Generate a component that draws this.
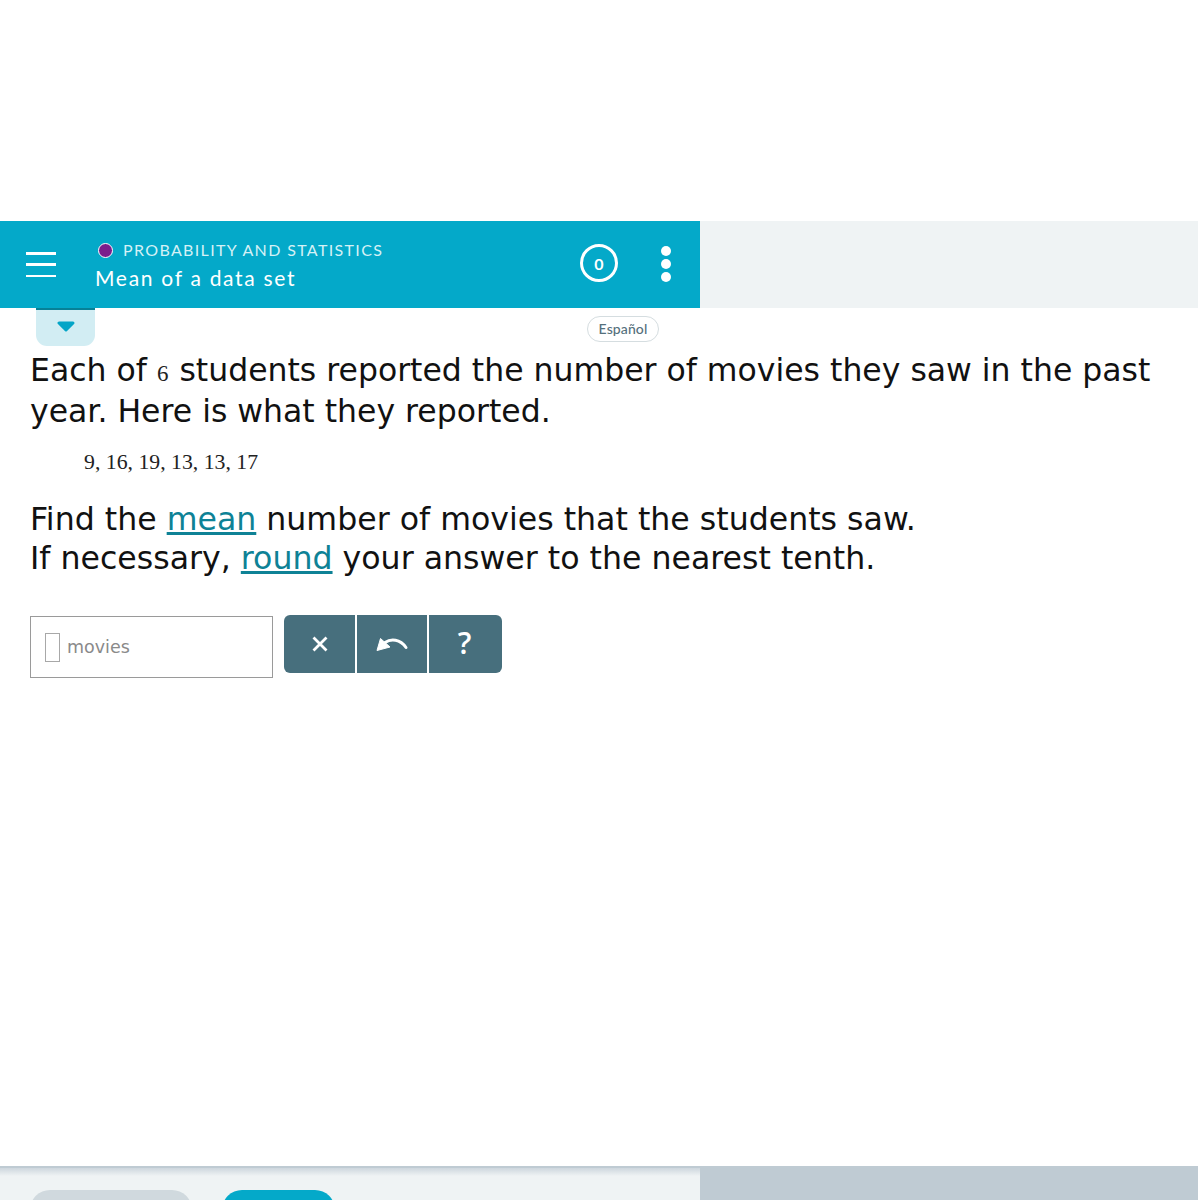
<script>
  const values = [9, 16, 19, 13, 13, 17];
</script>

<div class="page">
  <div class="top-row">
    <header class="topic-bar">
      <button class="menu" aria-label="Menu">
        <span></span><span></span><span></span>
      </button>
      <div class="titles">
        <div class="subject"><i class="dot"></i>PROBABILITY AND STATISTICS</div>
        <div class="topic">Mean of a data set</div>
      </div>
      <div class="score">0</div>
      <div class="more"><span></span><span></span><span></span></div>
    </header>
    <div class="side"></div>
  </div>

  <div class="tools-row">
    <div class="drop-tab"><svg width="18" height="11" viewBox="0 0 18 11"><path d="M2 2h14L9 9z" fill="#04a5c7" stroke="#04a5c7" stroke-width="3" stroke-linejoin="round"/></svg></div>
    <div class="lang">Español</div>
  </div>

  <main class="problem">
    <p class="intro">Each of <span class="six">6</span> students reported the number of movies they saw in the past year. Here is what they reported.</p>
    <p class="data">{values.join(", ")}</p>
    <p class="ask">Find the <a href="#mean">mean</a> number of movies that the students saw.<br />If necessary, <a href="#round">round</a> your answer to the nearest tenth.</p>

    <div class="answer-row">
      <div class="answer"><i class="box"></i><span>movies</span></div>
      <div class="keys">
        <button aria-label="Clear"><svg width="18" height="18" viewBox="0 0 18 18"><path d="M2.5 2.5l13 13M15.5 2.5l-13 13" stroke="#fff" stroke-width="2.8" fill="none"/></svg></button>
        <button class="undo" aria-label="Undo"><svg width="34" height="18" viewBox="0 0 34 18"><path d="M10 7.5C16 3.5 25 4 31 12.5" stroke="#fff" stroke-width="3" fill="none" stroke-linecap="round"/><path d="M2 15.5L5.5 3.5 15 12z" fill="#fff" stroke="#fff" stroke-linejoin="round"/></svg></button>
        <button class="help"><span>?</span></button>
      </div>
    </div>
  </main>

  <footer class="bottom">
    <div class="bottom-main">
      <div class="pill grey"></div>
      <div class="pill teal"></div>
    </div>
    <div class="bottom-side"></div>
  </footer>
</div>

<style>
  :global(body) {
    margin: 0;
    background: #fff;
  }

  .page {
    height: 1200px;
    overflow: hidden;
    display: flex;
    flex-direction: column;
    padding-top: 221px;
    box-sizing: border-box;
    font-family: "DejaVu Sans", sans-serif;
  }

  .top-row {
    display: flex;
    height: 87px;
  }

  .topic-bar {
    width: 700px;
    background: #04a9c9;
    display: flex;
    align-items: center;
    color: #fff;
    font-family: "Lato", sans-serif;
  }

  .side {
    flex: 1;
    background: #eff3f4;
  }

  .menu {
    width: 30px;
    height: 25px;
    margin: 0 0 0 26px;
    padding: 0;
    border: 0;
    background: none;
    display: flex;
    flex-direction: column;
    justify-content: space-between;
  }

  .menu span {
    height: 2.5px;
    background: #fff;
  }

  .titles {
    width: 484px;
    margin: 2px 0 0 39px;
  }

  .subject {
    font-size: 16px;
    letter-spacing: 1.35px;
    line-height: 20px;
    color: #d5f1f6;
    display: flex;
    align-items: center;
    margin-left: 3px;
  }

  .dot {
    width: 15px;
    height: 15px;
    box-sizing: border-box;
    border: 1.5px solid #fff;
    border-radius: 50%;
    background: #7b1e8c;
    margin-right: 10px;
  }

  .topic {
    font-size: 21px;
    letter-spacing: 1.7px;
    line-height: 26px;
    margin-top: 5px;
  }

  .score {
    width: 38px;
    height: 38px;
    box-sizing: border-box;
    border: 3px solid #fff;
    border-radius: 50%;
    margin: -3px 0 0 1px;
    display: flex;
    align-items: center;
    justify-content: center;
    font-weight: 700;
    font-size: 16px;
  }

  .more {
    display: flex;
    flex-direction: column;
    gap: 3px;
    margin: -2px 0 0 43px;
  }

  .more span {
    width: 10px;
    height: 10px;
    border-radius: 50%;
    background: #fff;
  }

  .tools-row {
    position: relative;
    height: 38px;
  }

  .drop-tab {
    position: absolute;
    left: 36px;
    top: 0;
    width: 59px;
    height: 38px;
    box-sizing: border-box;
    border-top: 2px solid #078197;
    border-radius: 0 0 11px 11px;
    background: #d2edf3;
    display: flex;
    justify-content: center;
    padding-top: 11px;
  }

  .drop-tab svg {
    display: block;
  }

  .lang {
    position: absolute;
    left: 587px;
    top: 8px;
    width: 72px;
    height: 26px;
    box-sizing: border-box;
    border: 1px solid #d5dde0;
    border-radius: 13px;
    text-align: center;
    line-height: 24px;
    font-size: 14px;
    font-weight: 500;
    letter-spacing: 0.1px;
    color: #55707c;
    font-family: "Lato", sans-serif;
  }

  .problem {
    flex: 1;
    padding: 4px 30px 0;
    color: #111;
    font-size: 31.5px;
  }

  p {
    margin: 0;
  }

  .intro {
    line-height: 41px;
  }

  .six {
    font-family: "Liberation Serif", serif;
    font-size: 23px;
    line-height: 1;
    margin-right: 1px;
    color: #222;
  }

  .data {
    font-family: "Liberation Serif", serif;
    font-size: 21.75px;
    line-height: 30px;
    color: #222;
    margin: 15px 0 0 54px;
  }

  .ask {
    font-size: 31.6px;
    line-height: 39px;
    margin-top: 23px;
  }

  a {
    color: #0e8296;
  }

  .answer-row {
    display: flex;
    align-items: flex-start;
    margin-top: 37px;
    gap: 11px;
  }

  .answer {
    width: 243px;
    height: 62px;
    box-sizing: border-box;
    border: 1px solid #9a9a9a;
    margin-top: 1px;
    display: flex;
    align-items: center;
    padding-left: 14px;
    gap: 7px;
    color: #8a8a8a;
    font-size: 17.5px;
  }

  .box {
    width: 15px;
    height: 29px;
    border: 1.5px solid #a8a8a8;
    box-sizing: border-box;
  }

  .keys {
    display: flex;
    gap: 2px;
    border-radius: 6px;
    overflow: hidden;
  }

  .keys button {
    width: 71px;
    height: 58px;
    border: 0;
    padding: 0;
    background: #476f7d;
    color: #fff;
    display: flex;
    align-items: center;
    justify-content: center;
  }

  .keys button.undo {
    width: 70px;
  }

  .keys button.help {
    width: 73px;
    font: 600 30px "Open Sans", sans-serif;
  }

  .help span {
    margin: -3px 2px 0 0;
  }

  .bottom {
    height: 34px;
    display: flex;
    border-top: 2px solid #bfcbd3;
    box-sizing: border-box;
  }

  .bottom-main {
    width: 700px;
    background: linear-gradient(#cdd6dd, #eff3f4 8px);
    display: flex;
    gap: 30px;
    padding: 22px 0 0 30px;
    box-sizing: border-box;
  }

  .bottom-side {
    flex: 1;
    background: #bfcbd3;
  }

  .pill {
    height: 40px;
    border-radius: 22px;
  }

  .grey {
    width: 162px;
    background: #d0d9de;
  }

  .teal {
    width: 113px;
    background: #04a9c9;
  }
</style>
